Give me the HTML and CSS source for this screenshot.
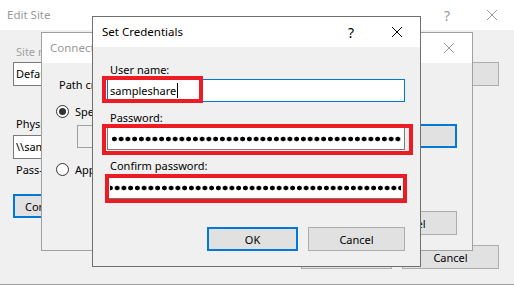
FILE: index.html
```html
<!DOCTYPE html>
<html lang="en">
<head>
    <meta charset="UTF-8">
    <title>Set Credentials</title>
    <link rel="stylesheet" href="styles.css">
</head>
<body>
<div class="desktop">

    <!-- Edit Site (back window) -->
    <div class="win win-edit">
        <div class="titlebar inactive">
            <span class="title">Edit Site</span>
            <span class="cap cap-help">?</span>
            <span class="cap"><svg width="10" height="10" viewBox="0 0 10 10"><path d="M0 0L10 10M10 0L0 10" stroke="#9a9a9a" stroke-width="1"/></svg></span>
        </div>
        <div class="body edit-body">
            <div class="label disabled">Site name:</div>
            <div class="row">
                <div class="textbox site-box">Default Web Site</div>
                <div class="btn select-btn">Select...</div>
            </div>
            <div class="label phys-label">Physical path:</div>
            <div class="textbox phys-box">\\sampleshare\web</div>
            <div class="label pass-label">Pass-through authentication</div>
            <div class="btn focus connect-btn">Connect as...</div>
            <div class="buttons edit-buttons">
                <div class="btn">OK</div>
                <div class="btn">Cancel</div>
            </div>
        </div>
    </div>

    <!-- Connect As (middle window) -->
    <div class="win win-connect">
        <div class="titlebar inactive">
            <span class="title">Connect As</span>
            <span class="cap"><svg width="10" height="10" viewBox="0 0 10 10"><path d="M0 0L10 10M10 0L0 10" stroke="#9a9a9a" stroke-width="1"/></svg></span>
        </div>
        <div class="body connect-body">
            <div class="label">Path credentials:</div>
            <div class="radio-row first">
                <span class="radio checked"></span>
                <span>Specific user:</span>
            </div>
            <div class="row user-row">
                <div class="textbox user-box"></div>
                <div class="btn focus set-btn">Set...</div>
            </div>
            <div class="radio-row second">
                <span class="radio"></span>
                <span>Application user (pass-through authentication)</span>
            </div>
            <div class="buttons connect-buttons">
                <div class="btn">OK</div>
                <div class="btn">Cancel</div>
            </div>
        </div>
    </div>

    <!-- Set Credentials (active window) -->
    <div class="win win-cred">
        <div class="titlebar">
            <span class="title">Set Credentials</span>
            <span class="cap cap-help active">?</span>
            <span class="cap"><svg width="10" height="10" viewBox="0 0 10 10"><path d="M0 0L10 10M10 0L0 10" stroke="#000" stroke-width="1"/></svg></span>
        </div>
        <div class="body cred-body">
            <div class="label">User name:</div>
            <div class="input focused">sampleshare<span class="caret"></span></div>
            <div class="label gap">Password:</div>
            <div class="input"><span class="dots"></span></div>
            <div class="label gap">Confirm password:</div>
            <div class="input confirm"><span class="dots shifted"></span></div>
            <div class="buttons cred-buttons">
                <div class="btn focus ok-btn">OK</div>
                <div class="btn cancel-btn">Cancel</div>
            </div>

            <!-- red annotation frames -->
            <div class="mark mark-user"></div>
            <div class="mark mark-pass"></div>
            <div class="mark mark-confirm"></div>
        </div>
    </div>

</div>
</body>
</html>
```

FILE: styles.css
```css
* {
    box-sizing: border-box;
}

body {
    margin: 0;
    font-family: "Noto Sans", "Open Sans", sans-serif;
    font-size: 11px;
    color: #000;
    background: #f0f0f0;
}

.desktop {
    position: relative;
    width: 514px;
    height: 285px;
    overflow: hidden;
}

/* windows on the desktop */
.win {
    position: absolute;
    background: #f0f0f0;
    display: flex;
    flex-direction: column;
}

.win-edit {
    left: 0;
    top: 0;
    width: 515px;
    height: 285px;
    border-bottom: 1px solid #a0a0a0;
}

.win-connect {
    left: 41px;
    top: 32px;
    width: 432px;
    height: 219px;
    border: 1px solid #a0a0a0;
}

.win-cred {
    left: 92px;
    top: 16px;
    width: 329px;
    height: 251px;
    border: 1px solid #707070;
}

.titlebar {
    height: 30px;
    flex-shrink: 0;
    background: #fff;
    display: flex;
    align-items: center;
}

.titlebar .title {
    flex: 1;
    padding-left: 9px;
    line-height: 16px;
    font-size: 11.5px;
}

.win-edit .titlebar .title {
    padding-left: 7px;
}

.win-connect .titlebar .title {
    padding-left: 8px;
}

.titlebar.inactive .title {
    color: #999;
}

.cap {
    width: 46px;
    height: 30px;
    display: flex;
    align-items: center;
    justify-content: center;
}

.cap-help {
    font-size: 14px;
    color: #9a9a9a;
}

.cap-help.active {
    color: #000;
}

.win-edit .cap-help {
    width: 44px;
}

.body {
    flex: 1;
    position: relative;
    display: flex;
    flex-direction: column;
    align-items: flex-start;
}

.label {
    line-height: 16px;
    padding-left: 3px;
    white-space: nowrap;
}

.label.disabled {
    color: #a0a0a0;
}

.row {
    display: flex;
    align-items: flex-start;
    width: 100%;
}

.textbox {
    height: 24px;
    line-height: 22px;
    padding-left: 2px;
    border: 1px solid #7a7a7a;
    background: #fff;
    white-space: nowrap;
    overflow: hidden;
}

.btn {
    height: 24px;
    display: flex;
    align-items: center;
    justify-content: center;
    background: #e1e1e1;
    border: 1px solid #adadad;
    white-space: nowrap;
}

.btn.focus {
    border: 2px solid #0078d7;
}

.buttons {
    display: flex;
    justify-content: flex-end;
    gap: 10px;
    width: 100%;
}

.buttons .btn {
    width: 97px;
}

/* Edit Site contents */
.edit-body {
    padding: 14px 16px 0 13px;
}

.edit-body .row {
    margin-top: 2px;
    gap: 12px;
}

.site-box {
    flex: 1;
}

.select-btn {
    width: 96px;
}

.phys-label {
    margin-top: 30px;
}

.phys-box {
    margin-top: 3px;
    width: 440px;
}

.pass-label {
    margin-top: 3px;
}

.connect-btn {
    margin-top: 16px;
    width: 110px;
    justify-content: flex-start;
    padding-left: 10px;
}

.edit-buttons {
    margin-top: 27px;
}

.edit-buttons .btn:first-child {
    width: 91px;
}

/* Connect As contents */
.connect-body {
    padding: 14px 15px 0 14px;
}

.radio-row {
    display: flex;
    align-items: center;
    gap: 6px;
    height: 16px;
    white-space: nowrap;
}

.radio-row.first {
    margin-top: 10px;
}

.radio-row.second {
    margin-top: 13px;
}

.radio {
    width: 13px;
    height: 13px;
    border: 1px solid #333;
    border-radius: 50%;
    background: #fff;
    display: flex;
    align-items: center;
    justify-content: center;
}

.radio.checked::after {
    content: "";
    width: 7px;
    height: 7px;
    border-radius: 50%;
    background: #333;
}

.user-row {
    margin-top: 5px;
    padding-left: 21px;
    gap: 10px;
}

.user-box {
    flex: 1;
    height: 23px;
    margin-top: 1px;
    background: #f0f0f0;
    border-color: #a0a0a0;
}

.set-btn {
    width: 112px;
}

.connect-buttons {
    margin-top: 34px;
}

/* Set Credentials contents */
.cred-body {
    padding: 15px 15px 0 14px;
}

.input {
    width: 298px;
    height: 23px;
    margin-top: 1px;
    border: 1px solid #7a7a7a;
    background: #fff;
    padding-left: 2px;
    line-height: 21px;
    display: flex;
    align-items: center;
}

.input.focused {
    border-color: #0078d7;
}

.input.confirm {
    margin-top: 2px;
}

.label.gap {
    margin-top: 8px;
}

.caret {
    display: inline-block;
    width: 1px;
    height: 15px;
    margin-left: 1px;
    background: #000;
}

.dots {
    display: block;
    width: 291px;
    height: 6px;
    margin-left: 1px;
    background: radial-gradient(circle at center, #000 2.1px, transparent 2.7px) 0 0 / 6.75px 6px repeat-x;
}

.dots.shifted {
    margin-left: 0;
    background-position: -3px 0;
}

.cred-buttons {
    margin-top: 28px;
}

.cred-buttons .ok-btn {
    width: 91px;
}

/* red annotation frames laid over the fields */
.mark {
    position: absolute;
    border: 4px solid #ed1c24;
}

.mark-user {
    left: 9px;
    top: 29px;
    width: 101px;
    height: 27px;
}

.mark-pass {
    left: 9px;
    top: 77px;
    width: 311px;
    height: 31px;
}

.mark-confirm {
    left: 12px;
    top: 127px;
    width: 302px;
    height: 29px;
}
```
